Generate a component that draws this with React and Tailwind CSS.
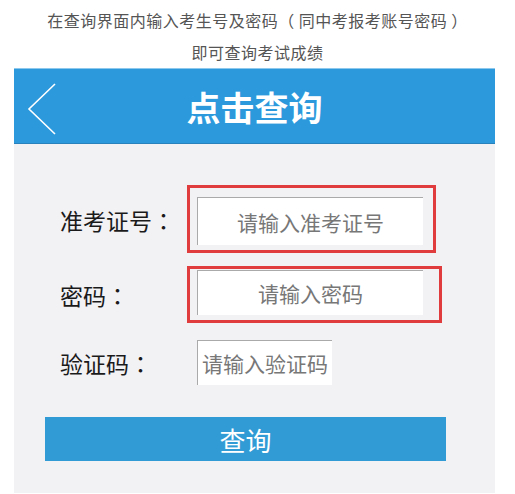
import React from "react";

const cjk = { fontFamily: '"Noto Sans CJK SC", "Microsoft YaHei", sans-serif' };
const tc = { fontFamily: '"Noto Sans CJK TC", sans-serif' };

function Label({ text, width }) {
  return (
    <span className={`${width} text-[23px] text-[#1a1a1a] pt-[2px]`}>
      {text}
      <span style={tc}>：</span>
    </span>
  );
}

function App() {
  return (
    <div className="bg-white w-[515px] h-[494px] overflow-hidden" style={cjk}>
      <div className="pt-[4px] text-center text-[16px] leading-[32px] text-[#555] tracking-[0.5px]">
        <p>
          在查询界面内输入考生号及密码<span style={tc}>（</span> 同中考报考账号密码 <span style={tc}>）</span>
        </p>
        <p>即可查询考试成绩</p>
      </div>
      <div className="ml-[14px] w-[481px]">
        <div className="grid grid-cols-[60px_1fr_60px] items-center h-[76px] bg-[#2c99dd] border-t border-[#8cc8ee] border-b border-b-[#2a82bd]">
          <svg width="60" height="76" viewBox="0 0 60 76">
            <polyline points="41,15 15,40 41,65" fill="none" stroke="white" strokeWidth="1.6" />
          </svg>
          <h1 className="text-center text-white font-bold text-[34px] leading-none">点击查询</h1>
          <div />
        </div>
        <div className="bg-[#f2f1f4] h-[349px] pt-[41px]">
          <div className="flex items-center pl-[46px]">
            <Label text="准考证号" width="w-[127px]" />
            <div className="w-[249px] h-[68px] border-[3px] border-[#e03b3d] pt-[9px] pl-[7px]">
              <input
                className="w-[226px] h-[48px] bg-white border-t border-l border-[#aaa] outline-none text-center text-[21px] placeholder:text-[#777]"
                placeholder="请输入准考证号"
              />
            </div>
          </div>
          <div className="flex items-center pl-[46px] mt-[13px]">
            <Label text="密码" width="w-[127px]" />
            <div className="w-[255px] h-[57px] border-[3px] border-[#e03b3d] pt-[1px] pl-[7px]">
              <input
                type="text"
                className="w-[226px] h-[45px] bg-white border-t border-l border-[#aaa] outline-none text-center text-[21px] placeholder:text-[#777]"
                placeholder="请输入密码"
              />
            </div>
          </div>
          <div className="flex items-center pl-[46px] mt-[17px]">
            <Label text="验证码" width="w-[137px]" />
            <input
              className="w-[135px] h-[45px] bg-white border-t border-l border-[#aaa] outline-none pl-[4px] text-[21px] placeholder:text-[#777]"
              placeholder="请输入验证码"
            />
          </div>
          <button className="block ml-[31px] mt-[32px] w-[401px] h-[44px] bg-[#319bd6] text-white text-[26px] leading-none pt-[2px]">
            查询
          </button>
        </div>
      </div>
    </div>
  );
}

export default App;
